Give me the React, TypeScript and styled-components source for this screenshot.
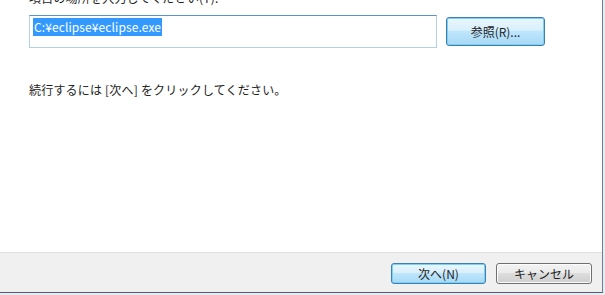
import styled, { createGlobalStyle } from 'styled-components'

const GlobalStyle = createGlobalStyle`
  html, body {
    margin: 0;
    padding: 0;
    background: #e9ecef;
  }
  body {
    font-family: 'Noto Sans CJK JP', 'Liberation Sans', sans-serif;
    font-size: 12px;
    color: #1e1e1e;
  }
`

const Window = styled.div`
  width: 602px;
  height: 292px;
  border-right: 1px solid #6e7f94;
  border-bottom: 1px solid #4c5e78;
  background: #ffffff;
  display: flex;
  flex-direction: column;
  overflow: hidden;
`

const Body = styled.div`
  flex: 1;
  padding: 0 0 0 29px;
  display: flex;
  flex-direction: column;
`

const Label = styled.div`
  margin-top: -11px;
  height: 17px;
  line-height: 17px;
  white-space: nowrap;
  letter-spacing: 0.2px;
`

const PathRow = styled.div`
  display: flex;
  align-items: center;
  gap: 9px;
  margin-top: 9px;
`

const PathInput = styled.div`
  box-sizing: border-box;
  width: 408px;
  height: 33px;
  border: 1px solid #b5cfe7;
  border-top-color: #5a93c4;
  background: #fff;
  padding: 2px 3px;
`

const Selected = styled.span`
  display: inline-block;
  background: #3399ff;
  color: #ffffff;
  height: 18px;
  line-height: 18px;
  padding: 0 1px;
  letter-spacing: 0.1px;
`

const Button = styled.button<{ $primary?: boolean; $w: number; $h: number }>`
  box-sizing: border-box;
  width: ${p => p.$w}px;
  height: ${p => p.$h}px;
  border-radius: 3px;
  font-family: 'Noto Sans CJK JP', 'Liberation Sans', sans-serif;
  font-size: 12px;
  color: #1e1e1e;
  padding: 0;
  cursor: default;
  border: 1px solid ${p => (p.$primary ? '#3c7fb1' : '#707070')};
  background: ${p =>
    p.$primary
      ? 'linear-gradient(#eaf6fd 0%, #d9f0fc 45%, #bee6fd 50%, #a7d9f5 100%)'
      : 'linear-gradient(#f2f2f2 0%, #ebebeb 45%, #dddddd 50%, #cfcfcf 100%)'};
  box-shadow: ${p =>
    p.$primary ? 'inset 0 0 0 1px #7dd0f5' : 'inset 0 0 0 1px #fcfcfc'};
`

const Hint = styled.div`
  margin-top: 33px;
  line-height: 17px;
  letter-spacing: 0.2px;
`

const Footer = styled.div`
  height: 40px;
  border-top: 1px solid #dfdfdf;
  background: #f0f0f0;
  display: flex;
  justify-content: flex-end;
  align-items: flex-start;
  gap: 10px;
  padding: 10px 10px 0 0;
  box-sizing: border-box;
`

export default function App() {
  return (
    <>
      <GlobalStyle />
      <Window>
        <Body>
          <Label>項目の場所を入力してください(T):</Label>
          <PathRow>
            <PathInput>
              <Selected>C:¥eclipse¥eclipse.exe</Selected>
            </PathInput>
            <Button $primary $w={99} $h={29}>
              参照(R)...
            </Button>
          </PathRow>
          <Hint>続行するには [次へ] をクリックしてください。</Hint>
        </Body>
        <Footer>
          <Button $primary $w={95} $h={21}>
            次へ(N)
          </Button>
          <Button $w={96} $h={21}>
            キャンセル
          </Button>
        </Footer>
      </Window>
    </>
  )
}
